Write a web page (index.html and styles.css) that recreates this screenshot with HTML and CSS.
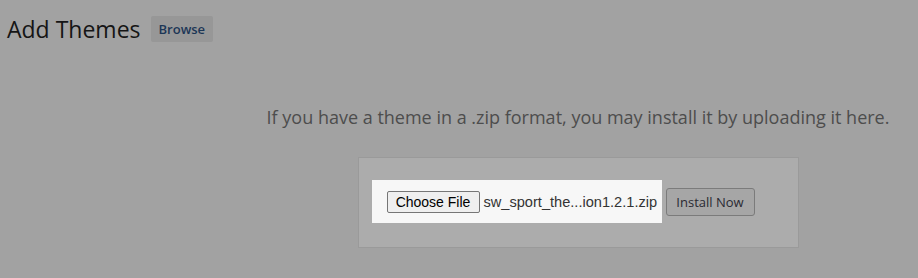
FILE: index.html
```html
<!DOCTYPE html>
<html lang="en">
<head>
  <meta charset="UTF-8">
  <title>Add Themes</title>
  <link rel="stylesheet" href="styles.css">
</head>
<body>
  <div class="wrap">
    <div class="page-head">
      <h1>Add Themes</h1>
      <a class="browse-btn" href="#">Browse</a>
    </div>

    <div class="upload-area">
      <p class="install-help">If you have a theme in a .zip format, you may install it by uploading it here.</p>
      <form class="upload-form">
        <div class="file-field">
          <button type="button" class="choose-btn">Choose File</button>
          <span class="file-name">sw_sport_the...ion1.2.1.zip</span>
        </div>
        <button type="button" class="install-btn">Install Now</button>
      </form>
    </div>
  </div>
</body>
</html>
```

FILE: styles.css
```css
body {
  margin: 0;
  background-color: #a2a2a2;
  font-family: "Open Sans", sans-serif;
  color: #111;
}

.wrap {
  width: 918px;
  height: 278px;
  overflow: hidden;
}

.page-head {
  display: flex;
  align-items: center;
  padding: 16px 0 0 7px;
  gap: 10px;
}

.page-head h1 {
  margin: 0;
  font-size: 23px;
  font-weight: 400;
  line-height: 26px;
  color: #151515;
}

.browse-btn {
  display: inline-block;
  background: #979797;
  color: #1c3656;
  font-size: 13px;
  font-weight: 600;
  text-decoration: none;
  height: 26px;
  line-height: 26px;
  padding: 0 8px;
  border-radius: 2px;
}

.upload-area {
  padding-left: 238px;
  display: flex;
  flex-direction: column;
  align-items: center;
}

.install-help {
  margin: 62px 0 0;
  font-size: 18px;
  line-height: 26px;
  color: #4d4d4d;
}

.upload-form {
  margin-top: 27px;
  width: 413px;
  height: 43px;
  padding: 22px 13px 24px 13px;
  background: #acacac;
  border: 1px solid #9a9a9a;
  display: flex;
  align-items: center;
  gap: 4px;
}

.file-field {
  background: #f7f7f7;
  height: 43px;
  width: 275px;
  flex-shrink: 0;
  padding-left: 15px;
  display: flex;
  align-items: center;
  gap: 4px;
}

.choose-btn {
  flex-shrink: 0;
  font-family: "Liberation Sans", Arial, sans-serif;
  font-size: 14px;
  height: 22px;
  width: 93px;
  padding: 0;
  background: #efefef;
  border: 1px solid #767676;
  border-radius: 2px;
  color: #000;
}

.file-name {
  font-family: "Liberation Sans", Arial, sans-serif;
  font-size: 14.6px;
  color: #333;
  white-space: nowrap;
}

.install-btn {
  flex-shrink: 0;
  font-family: "Open Sans", sans-serif;
  font-size: 13px;
  height: 28px;
  width: 89px;
  padding: 0;
  background: #a6a6a6;
  border: 1px solid #7b7b7b;
  border-radius: 3px;
  color: #2a2a33;
}
```
